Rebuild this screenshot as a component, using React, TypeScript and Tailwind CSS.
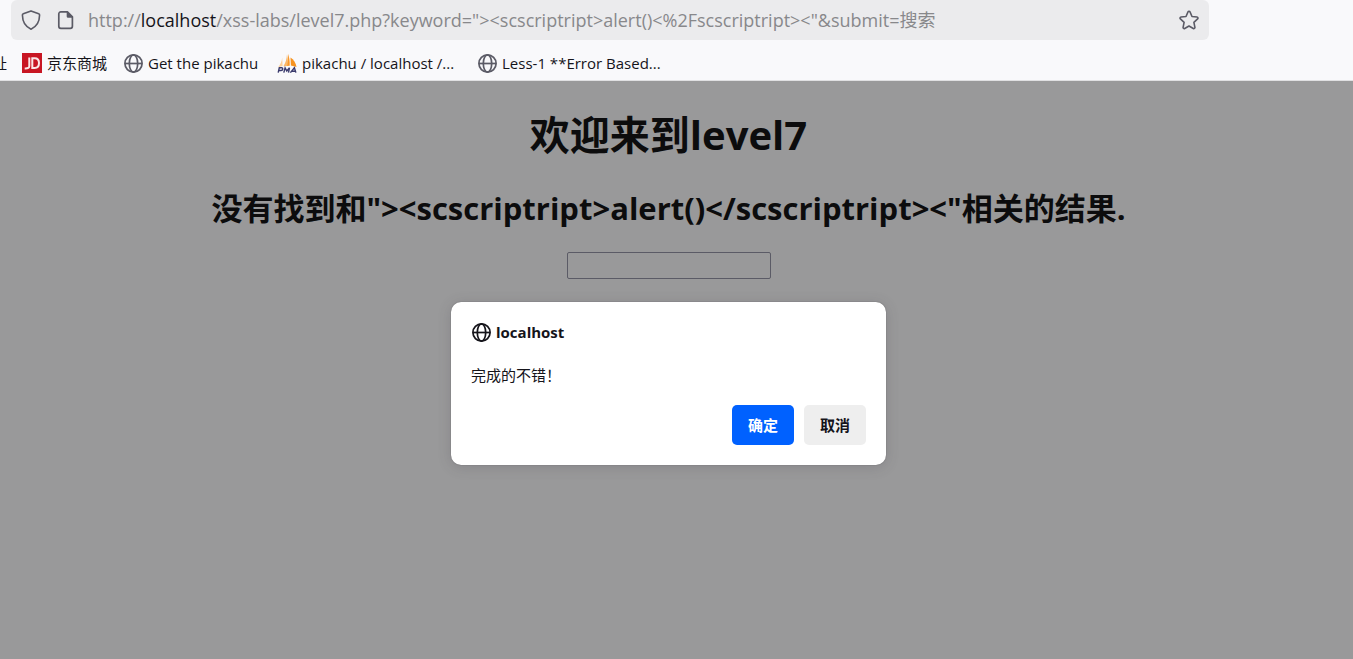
import type { ReactNode } from "react";

const sans = "font-['Open_Sans','Noto_Sans_CJK_SC',sans-serif]";

function GlobeIcon({ className }: { className: string }) {
  return (
    <svg viewBox="0 0 20 20" className={className} fill="none" stroke="currentColor" strokeWidth="1.7" aria-hidden="true">
      <circle cx="10.500" cy="10.500" r="8.600" />
      <ellipse cx="10.500" cy="10.500" rx="4.200" ry="8.600" />
      <path d="M1.900 10.500h17.200" />
    </svg>
  );
}

function ShieldIcon() {
  return (
    <svg viewBox="0 0 20 20" className="size-5 shrink-0" fill="none" stroke="currentColor" strokeWidth="1.600" strokeLinejoin="round" aria-hidden="true">
      <path d="M10 .9 17.700 3.800c.6.2.9.7.9 1.300C18.500 11.500 15.200 17 10 19.200 4.800 17 1.500 11.500 1.400 5.100c0-.6.3-1.100.9-1.300z" />
    </svg>
  );
}

function PageIcon() {
  return (
    <svg viewBox="0 0 18 20" className="h-5 w-[18px] shrink-0" aria-hidden="true">
      <path d="M3.800 1.900h6.600l5 5v9.400a2 2 0 0 1-2 2h-9.600a2 2 0 0 1-2-2v-12.400a2 2 0 0 1 2-2z" fill="none" stroke="currentColor" strokeWidth="1.700" strokeLinejoin="round" />
      <path d="M9.700 1.500h1l5.300 5.300v1h-5a1.300 1.300 0 0 1-1.300-1.300z" fill="currentColor" />
    </svg>
  );
}

function StarIcon() {
  return (
    <svg viewBox="0 0 20 20" className="size-5" fill="none" stroke="currentColor" strokeWidth="1.600" strokeLinejoin="round" aria-hidden="true">
      <path d="M9 1.900a1.100 1.100 0 0 1 2 0l2 4.600 5 .5a1.100 1.100 0 0 1 .6 1.900l-3.700 3.400 1 5a1.100 1.100 0 0 1-1.600 1.200L10 16l-4.300 2.500a1.100 1.100 0 0 1-1.600-1.200l1-5L1.400 8.900A1.100 1.100 0 0 1 2 7l5-.5z" />
    </svg>
  );
}

function JdIcon() {
  return (
    <svg viewBox="0 0 20 20" className="size-5 shrink-0" aria-hidden="true">
      <path fill="#c81623" d="M0 0h20v20H0z" />
      <path d="M7.300 4.500v8.400c0 2-1.200 2.600-4.600 2.500M10.300 5.200v9.700h2.400c3.200 0 4.300-1.900 4.300-4.900s-1.300-4.800-4.300-4.800z" fill="none" stroke="#fbe6e7" strokeWidth="2" />
    </svg>
  );
}

function PmaIcon() {
  return (
    <svg viewBox="0 0 20 20" className="size-5 shrink-0" aria-hidden="true">
      <path fill="#fcd09a" d="M5.200 4.500 5.600 13l-4.400 1.200C3.400 11.300 4.900 8.200 5.200 4.500z" />
      <path fill="#fbb868" d="M10 1.200c-.3 4.600-1.300 8.400-3.600 12.100l4.400-.4z" />
      <path fill="#f8982a" d="M11 .8c1.200 3.400 1.900 7.500 1.700 11.900l-2.500.2z" />
      <path fill="#f7931e" d="M13.500 4.500c3.200 2.200 5.300 5.400 6 9.500l-5.600-1.500z" />
      <path d="M1.200 19.600l1.100-4.800h2.400c1.500 0 1.400 2.600-.6 2.700H2M6.800 19.600l1.300-4.800 1.700 3.200 2.700-3.200-1 4.800M13.400 19.600l4-4.800 1.500 4.800M14.900 18.200h3.500" fill="none" stroke="#3b3b6d" strokeWidth="1.400" />
    </svg>
  );
}

function Bookmark({ icon, width = "", children }: { icon: ReactNode; width?: string; children: ReactNode }) {
  return (
    <a href="#" className={`flex items-center gap-[5px] whitespace-nowrap ${width}`}>
      {icon}
      <span>{children}</span>
    </a>
  );
}

export default function App() {
  return (
    <div className={`flex min-h-screen flex-col bg-[#99999a] text-[#0c0c0d] ${sans}`}>
      <header className="border-b border-[#e0e0e2] bg-[#f9f9fb] text-[#15141a]">
        <div className="mr-36 ml-[11px] flex h-10 items-center rounded-md bg-[#ebebed] px-2.5 text-[#5b5b66]">
          <ShieldIcon />
          <span className="ml-4 flex">
            <PageIcon />
          </span>
          <div className="ml-[13px] flex-1 overflow-hidden text-lg whitespace-nowrap text-[#88888b]">
            http://<span className="text-[#15141a]">localhost</span>
            {'/xss-labs/level7.php?keyword="><scscriptript>alert()<%2Fscscriptript><"&submit=搜索'}
          </div>
          <button type="button" aria-label="Bookmark this page">
            <StarIcon />
          </button>
        </div>
        <nav className="flex h-10 items-center gap-4 pt-1.5 text-[15px] leading-5">
          <a href="#" className="-mr-px flex w-[7px] justify-end overflow-hidden">
            址
          </a>
          <Bookmark icon={<JdIcon />}>京东商城</Bookmark>
          <Bookmark width="min-w-[138px]" icon={<GlobeIcon className="size-5 text-[#5b5b66]" />}>
            Get the pikachu
          </Bookmark>
          <Bookmark width="min-w-[184px]" icon={<PmaIcon />}>
            pikachu / localhost /...
          </Bookmark>
          <Bookmark icon={<GlobeIcon className="size-5 text-[#5b5b66]" />}>Less-1 **Error Based...</Bookmark>
        </nav>
      </header>

      <main className="relative flex flex-1 flex-col items-center pr-4">
        <h1 className="mt-7 text-[40px] leading-[52px] font-bold">欢迎来到level7</h1>
        <h2 className="mt-[27px] text-[31px] leading-10 font-bold">
          {'没有找到和"><scscriptript>alert()</scscriptript><"相关的结果.'}
        </h2>
        <input
          type="text"
          aria-label="Keyword"
          className="mt-6 h-[27px] w-[204px] rounded-xs border border-[#5b5b66] bg-transparent px-1"
        />

        <div className="absolute inset-x-0 top-[221px] flex justify-center pr-4">
          <div
            role="dialog"
            aria-labelledby="dialog-title"
            className="w-[435px] rounded-[10px] bg-white p-5 text-[15px] leading-5 text-[#15141a] shadow-[0_2px_14px_rgba(58,57,68,0.2),0_0_1px_rgba(0,0,0,0.5)]"
          >
            <div id="dialog-title" className="flex items-center gap-[5px] font-bold">
              <GlobeIcon className="size-5" />
              localhost
            </div>
            <p className="mt-[23px]">完成的不错！</p>
            <div className="mt-5 flex justify-end gap-2.5 font-bold">
              <button type="button" className="h-10 rounded-[5px] bg-[#0061ff] px-4 text-white">
                确定
              </button>
              <button type="button" className="h-10 rounded-[5px] bg-[#eeeeee] px-4">
                取消
              </button>
            </div>
          </div>
        </div>
      </main>
    </div>
  );
}
